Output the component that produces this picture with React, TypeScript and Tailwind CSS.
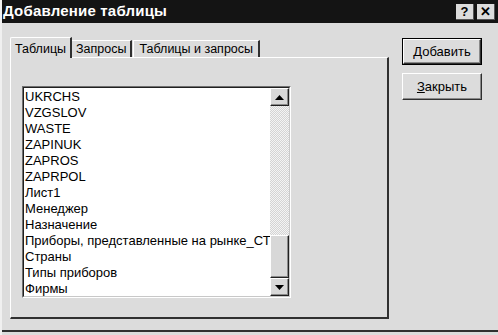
import React from 'react';

const items = [
  'UKRCHS',
  'VZGSLOV',
  'WASTE',
  'ZAPINUK',
  'ZAPROS',
  'ZAPRPOL',
  'Лист1',
  'Менеджер',
  'Назначение',
  'Приборы, представленные на рынке_СТАТИСТИКА',
  'Страны',
  'Типы приборов',
  'Фирмы',
];

function Arrow({ up }: { up?: boolean }) {
  return (
    <svg width="9" height="5" viewBox="0 0 9 5">
      <path d={up ? 'M4.5 0 L9 5 L0 5 Z' : 'M0 0 L9 0 L4.5 5 Z'} fill="#000" />
    </svg>
  );
}

function ScrollButton({ up }: { up?: boolean }) {
  return (
    <div className="h-[18px] w-full flex items-center justify-center bg-[#d8d8d8] border-t border-l border-t-white border-l-white border-r border-b border-r-[#202020] border-b-[#202020] shadow-[inset_-1px_-1px_0_#8a8a8a]">
      <Arrow up={up} />
    </div>
  );
}

export default function App() {
  return (
    <div
      className="w-[498px] h-[335px] bg-[#dcdcdc] text-black overflow-hidden flex flex-col border-l-2 border-l-[#f0f0f0]"
      style={{ fontFamily: '"Liberation Sans", Arial, sans-serif' }}
    >
      {/* title bar */}
      <div className="h-[23px] bg-[#141414] flex items-center pl-[3px] pr-[3px] -ml-[2px]">
        <span className="text-white font-bold text-[15px] tracking-[0.2px] flex-1">Добавление таблицы</span>
        <div className="flex gap-[3px]">
          <div className="w-[18px] h-[16px] bg-[#dcdcdc] flex items-center justify-center font-bold text-[13px] leading-none border-r border-b border-r-[#555] border-b-[#555]">?</div>
          <div className="w-[18px] h-[16px] bg-[#dcdcdc] flex items-center justify-center font-bold text-[13px] leading-none border-r border-b border-r-[#555] border-b-[#555]">✕</div>
        </div>
      </div>

      <div className="flex-1 flex border-b-2 border-b-[#303030] mb-[3px]">
        {/* tab control */}
        <div className="ml-[8px] mt-[14px] w-[379px] flex flex-col">
          <div className="flex items-end h-[20px] text-[12.5px]">
            <div className="h-[21px] -mb-[1px] z-10 bg-[#dcdcdc] border-l border-t border-white border-r-2 border-r-[#303030] pl-[4px] pr-[4px] pt-[2px] rounded-tl-[2px]">
              Таблицы
            </div>
            <div className="h-[17px] border-t border-t-white border-r-2 border-r-[#303030] px-[4px] leading-[16px]">
              Запросы
            </div>
            <div className="h-[17px] border-t border-l border-white border-r-2 border-r-[#303030] px-[5px] leading-[16px] ml-[1px]">
              Таблицы и запросы
            </div>
          </div>
          <div className="h-[262px] border-t border-l border-white border-r-2 border-b-2 border-r-[#303030] border-b-[#303030] pl-[11px] pt-[28px]">
            {/* listbox */}
            <div className="w-[269px] h-[212px] border-t border-l border-t-[#707070] border-l-[#707070] border-b border-r border-b-white border-r-white">
              <div className="w-full h-full border-t border-l border-t-[#202020] border-l-[#202020] border-b border-r border-b-[#c8c8c8] border-r-[#c8c8c8] bg-white flex">
                <div className="flex-1 overflow-hidden pl-[1px] pt-[1px] text-[13px] leading-[16px] whitespace-nowrap">
                  {items.map((t) => (
                    <div key={t} className="h-[16px]">{t}</div>
                  ))}
                </div>
                <div className="w-[19px] flex flex-col bg-[repeating-conic-gradient(#d4d4d4_0_25%,#f4f4f4_0_50%)] bg-[length:2px_2px]">
                  <ScrollButton up />
                  <div className="flex-1" />
                  <div className="h-[43px] bg-[#d8d8d8] border-t border-l border-t-white border-l-white border-r border-b border-r-[#202020] border-b-[#202020] shadow-[inset_-1px_-1px_0_#8a8a8a]" />
                  <ScrollButton />
                </div>
              </div>
            </div>
          </div>
        </div>

        {/* buttons */}
        <div className="ml-[13px] mt-[15px] flex flex-col gap-[8px]">
          <div className="w-[80px] h-[27px] border border-black">
            <div className="w-full h-full flex items-center justify-center text-[13px] border-t border-l border-white border-r border-b border-r-[#303030] border-b-[#303030] shadow-[inset_-1px_-1px_0_#8a8a8a]">
              Добавить
            </div>
          </div>
          <div className="w-[80px] h-[27px] flex items-center justify-center text-[13px] border-t border-l border-white border-r border-b border-r-[#303030] border-b-[#303030] shadow-[inset_-1px_-1px_0_#8a8a8a]">
            <span><span className="underline">З</span>акрыть</span>
          </div>
        </div>
      </div>
    </div>
  );
}
